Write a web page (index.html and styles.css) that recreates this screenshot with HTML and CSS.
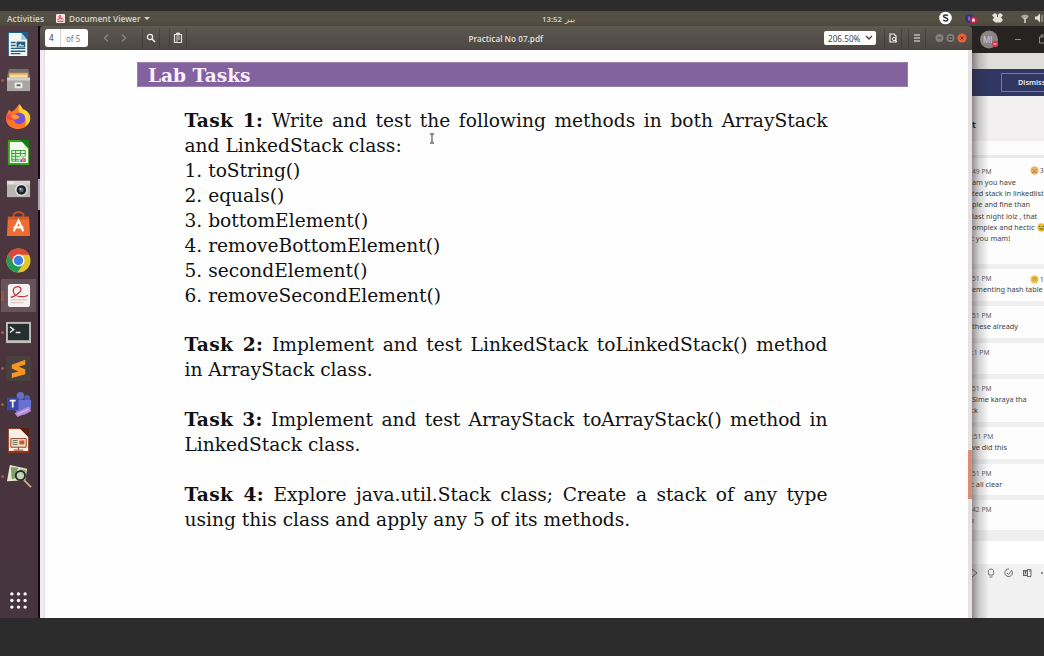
FILE: index.html
```html
<!DOCTYPE html>
<html lang="en">
<head>
<meta charset="utf-8">
<title>Practical No 07.pdf</title>
<link rel="stylesheet" href="styles.css">
</head>
<body>
<div class="screen">
  <header class="topbar">
    <span class="activities">Activities</span>
    <svg class="app-icon" viewBox="0 0 9 9"><rect width="9" height="9" rx="1" fill="#f3e4e4"/><path d="M1.5 5.5C4 5 6 1.5 4 1.5S2.500 5 7.500 5M1.500 7.300h6" fill="none" stroke="#c52c3c" stroke-width="1"/></svg>
    <span class="app-name">Document Viewer</span>
    <i class="caret"></i>
    <span class="clock"><bdi>13:52</bdi> <bdi class="day">بير</bdi></span>
    <svg class="tray" viewBox="0 0 112 15">
      <circle cx="13.500" cy="7" r="6.300" fill="#fff"/><path d="M15.800 5C15 3.500 11.500 3.600 11.500 5.300s4.300 1.200 4.300 3.200-3.800 2-4.500.3" fill="none" stroke="#333" stroke-width="1.500"/>
      <circle cx="37.500" cy="7.500" r="4.500" fill="#353679"/><path d="M37 5.500v4" stroke="#a9a7e0"/><circle cx="41.500" cy="9" r="3.500" fill="#c92045"/><path d="M40 10.500h3l-.5-3h-2z" fill="#fff"/>
      <path d="M60 4l3-2 2.500 2L68 2l3 2-2 2.500 2 2.500-2.500 2.500h-5L60.500 9 62 6.500z" fill="#e4e0da"/><path d="M65.500 4v2" stroke="#57534c"/>
      <path d="M89 5q4-3 8 0l-2 3h-4z" fill="#aaa69d"/><path d="M93 7v5" stroke="#e1ded7" stroke-width="1.500"/>
      <path d="M103 5.500h2l3-3v9l-3-3h-2z" fill="#e4e0da"/><path d="M110 4v7" stroke="#bcb8b0"/>
    </svg>
  </header>

  <main class="desktop">
    <nav class="dock">
      <div class="cell"><svg viewBox="0 0 26 26"><path d="M2 0h21v25H2z" fill="#1d6089"/><path d="M3 1h13l6 7v17H3z" fill="#f2f6f7"/><path d="M16 1v7h6z" fill="#9bc6db"/><path d="M5 11h5M5 14h5M5 17h15M5 20h15M5 22.500h10" stroke="#26607e" stroke-width="1.500"/><rect x="11" y="10" width="9" height="6" fill="#245b78"/><path d="M12 15l3-3 2 2 1-1 1 2z" fill="#b9d9e6"/></svg></div>
      <div class="cell running"><svg viewBox="0 0 26 26"><path d="M3 1h20l2 8H1z" fill="#77716d"/><path d="M3 5h20v6H3z" fill="#f1a84b"/><path d="M4 7h18v4H4z" fill="#f8dca5"/><path d="M1 10h24v14H1z" fill="#aaa6a3"/><path d="M1 10h24v3H1z" fill="#d2cfcc"/><rect x="9" y="15" width="8" height="6" rx="1" fill="#eeeceb"/><rect x="11" y="17" width="4" height="2" fill="#65605e"/></svg></div>
      <div class="cell"><svg viewBox="0 0 26 26"><path d="M3 6l3 2 3-2 5-6 3 5c5 1 9 6 8 12-1 5-6 9-12 9C6 26 0 22 0 15 0 11 2 9 3 6z" fill="#fb7629"/><path d="M14 0l4 6c6 2 8 6 7 11-1 3-3 5-5 6 2-7 0-12-6-14-2-3 0-6 0-9z" fill="#ffd63a"/><path d="M1 11c2-1 6-1 8 1l3 2-4 3-7-1z" fill="#ff4055"/><circle cx="14" cy="15" r="6" fill="#7650d6"/><path d="M4 12c3-2 7-1 10 1-1 3-4 3-6 3z" fill="#ff9b2c"/></svg></div>
      <div class="cell"><svg viewBox="0 0 26 26"><path d="M2 0h22v26H2z" fill="#36a31c"/><path d="M4 2h13l6 7v15H4z" fill="#f3faee"/><path d="M15 0h9v9z" fill="#187a12"/><path d="M6 11h14v11H6zM6 14h14M6 17h14M6 20h14M10 11v11M15 11v11" fill="none" stroke="#319a25"/><path d="M14 17h7v7h-7z" fill="#eee"/><path d="M15 20h1.500v3H15z" fill="#246cae"/><path d="M17 18h1.500v5H17z" fill="#ed6426"/><path d="M19 19h1.500v4H19z" fill="#8b529a"/></svg></div>
      <div class="cell"><svg viewBox="0 0 26 26"><path d="M1 5h24v17H1z" fill="#b9b5b4"/><path d="M1 5h24v4H1z" fill="#d8d4d2"/><path d="M3 6h5v2H3z" fill="#ece9e7"/><circle cx="16" cy="14.500" r="6.500" fill="#dfe0e0"/><circle cx="16" cy="14.500" r="5" fill="#202127"/><circle cx="16" cy="14.500" r="2.500" fill="#506881"/><circle cx="15" cy="13.500" r="1" fill="#c1d6e2"/></svg></div>
      <div class="cell"><svg viewBox="0 0 26 26"><path d="M8 7V2q5-4 10 0v5" fill="none" stroke="#c64e24" stroke-width="2"/><path d="M2 5h22l1 20H1z" fill="#ed6e32"/><path d="M2 5h22v3H2z" fill="#d85a29"/><path d="M8 20l5-11 5 11M8 16h10" fill="none" stroke="#fff" stroke-width="2.200"/></svg></div>
      <div class="cell"><svg viewBox="0 0 26 26"><circle cx="13" cy="13" r="12.500" fill="#e8c52d"/><path d="M2.200 6.700A12.500 12.500 0 0 1 24 7H13l-5 9z" fill="#dc483a"/><path d="M2.200 6.700A12.500 12.500 0 0 0 12 25.500l6-9.500-10 0z" fill="#269b55"/><circle cx="13" cy="13" r="6.200" fill="#fff"/><circle cx="13" cy="13" r="4.900" fill="#397fe4"/></svg></div>
      <div class="cell running active"><svg viewBox="0 0 26 26"><rect x="2" y="1" width="23" height="24" rx="3" fill="#f6f2f1"/><path d="M5 15C10 14 18 8 15 5S6 5 8 10s9 5 15 3" fill="none" stroke="#bd3344" stroke-width="1.300"/><path d="M5 17.500h17M5 20.500h13" stroke="#d7b8b8"/></svg></div>
      <div class="cell running"><svg viewBox="0 0 26 26"><path d="M0 2h26v22H0z" fill="#c0bfbb"/><path d="M2 4h22v17H2z" fill="#272e30"/><path d="M4 7l4 3-4 3M10 13h5" fill="none" stroke="#eee" stroke-width="1.500"/></svg></div>
      <div class="cell running"><svg viewBox="0 0 26 26"><rect width="26" height="26" rx="2" fill="#49403f"/><path d="M6 9l14-5v5l-7 2 7 3v5L6 23v-5l7-2-7-3z" fill="#f99622"/></svg></div>
      <div class="cell running"><svg viewBox="0 0 26 26"><circle cx="15" cy="4" r="4" fill="#646cc4"/><circle cx="22" cy="6" r="3" fill="#505bb8"/><path d="M9 8h17v9q-2 7-9 7-7-1-8-7z" fill="#6872d1"/><path d="M1 6h12v13H1z" fill="#3d49a7"/><path d="M4 9h6M7 9v7" stroke="#fff" stroke-width="1.700"/><path d="M9 22l15-7 2 5-14 6z" fill="#bd8dda"/><path d="M12 23l11-5" stroke="#e3bde9"/></svg></div>
      <div class="cell"><svg viewBox="0 0 26 26"><path d="M2 0h22v26H2z" fill="#943519"/><path d="M3 1h12l8 8v15H3z" fill="#f6eee7"/><path d="M14 0h10v10z" fill="#571e12"/><path d="M5 11h16v9H5zM13 20v3M8 23h10" fill="#eed9c3" stroke="#944123"/><path d="M7 13h5M7 15h5M7 17h5" stroke="#627d4d"/><path d="M14 13h5v4h-5z" fill="#cb5330"/></svg></div>
      <div class="cell running"><svg viewBox="0 0 26 26"><path d="M4 1l18 4-2 12-19 1z" fill="#e8e9d5"/><path d="M5 3l8 1-3 6 4 3-8 3z" fill="#7ea16c"/><path d="M15 5l6 1-1 5-6-2z" fill="#a4b78a"/><circle cx="15" cy="12" r="4.800" fill="#c6d4b6" stroke="#28302a" stroke-width="2"/><path d="M19 17l7 7" stroke="#d2a782" stroke-width="2"/></svg></div>
      <svg class="apps" viewBox="0 0 18 18"><g fill="#fff"><circle cx="2" cy="2" r="1.800"/><circle cx="9" cy="2" r="1.800"/><circle cx="16" cy="2" r="1.800"/><circle cx="2" cy="9" r="1.800"/><circle cx="9" cy="9" r="1.800"/><circle cx="16" cy="9" r="1.800"/><circle cx="2" cy="16" r="1.800"/><circle cx="9" cy="16" r="1.800"/><circle cx="16" cy="16" r="1.800"/></g></svg>
    </nav>
    <div class="strip"><i></i></div>

    <section class="viewer">
      <div class="toolbar">
        <div class="pager"><span class="page">4</span><span class="total">of 5</span></div>
        <svg class="arrows" viewBox="0 0 28 12"><path d="M7 2.500L3.500 6 7 9.500M21 2.500L24.500 6 21 9.500" fill="none" stroke="#8d8780" stroke-width="1.200"/></svg>
        <span class="tool find"><svg viewBox="0 0 10 10"><circle cx="4" cy="4" r="2.600" fill="none" stroke="#efece8" stroke-width="1.300"/><path d="M6 6l3 3" stroke="#efece8" stroke-width="1.600"/></svg></span>
        <span class="tool notes"><svg viewBox="0 0 10 10"><path d="M1.500 1.500h7v8h-7z" fill="none" stroke="#e4e0da" stroke-width="1.200"/><path d="M3.500 0h3v2h-3zM3 4h4M3 6h4M3 8h2" stroke="#e4e0da" fill="#e4e0da" stroke-width=".9"/></svg></span>
        <span class="title">Practical No 07.pdf</span>
        <span class="zoom">206.50%<svg viewBox="0 0 8 6"><path d="M1 1l3 3 3-3" fill="none" stroke="#3c3c3c" stroke-width="1.300"/></svg></span>
        <span class="tool export"><svg viewBox="0 0 10 10"><path d="M2 1h4l2 2v6H2z" fill="none" stroke="#efece8" stroke-width="1.200"/><circle cx="6" cy="6" r="1.600" fill="#514c46" stroke="#efece8"/><path d="M7 7l2 2" stroke="#efece8"/></svg></span>
        <span class="tool menu"><svg viewBox="0 0 10 10"><path d="M2 2h6M2 5h6M2 8h6" stroke="#efece8" stroke-width="1.200"/></svg></span>
        <svg class="controls" viewBox="0 0 32 10"><circle cx="4.500" cy="5" r="4" fill="#85817a"/><path d="M2.500 5h4" stroke="#46423e"/><circle cx="15.500" cy="5" r="4" fill="#85817a"/><path d="M14 3.500h3v3h-3z" fill="none" stroke="#46423e"/><circle cx="27" cy="5" r="4.600" fill="#ec6138"/><path d="M25.500 3.500l3 3M28.500 3.500l-3 3" stroke="#702a17"/></svg>
      </div>
      <div class="canvas">
        <article class="sheet">
          <h1>Lab Tasks</h1>
          <div class="tasks">
            <p class="full"><b>Task 1:</b> Write and test the following methods in both ArrayStack</p>
            <p>and LinkedStack class:</p>
            <p>1. toString()</p>
            <p>2. equals()</p>
            <p>3. bottomElement()</p>
            <p>4. removeBottomElement()</p>
            <p>5. secondElement()</p>
            <p>6. removeSecondElement()</p>
            <p class="full next"><b>Task 2:</b> Implement and test LinkedStack toLinkedStack() method</p>
            <p>in ArrayStack class.</p>
            <p class="full next"><b>Task 3:</b> Implement and test ArrayStack toArrayStack() method in</p>
            <p>LinkedStack class.</p>
            <p class="full next"><b>Task 4:</b> Explore java.util.Stack class; Create a stack of any type</p>
            <p>using this class and apply any 5 of its methods.</p>
          </div>
        </article>
        <div class="scroll"><i></i></div>
        <svg class="cursor" viewBox="0 0 6 11"><path d="M1 .8h1.500L3 1.500 3.500.8H5M3 1v9M1 10.200h1.500L3 9.500l.5.700H5" fill="none" stroke="#333" stroke-width="1"/></svg>
      </div>
    </section>

    <aside class="teams">
      <div class="teams-title"><svg viewBox="0 0 72 27"><circle cx="17" cy="13.500" r="9" fill="#8b8385"/><text class="initials" x="11" y="16.500">ML</text><circle cx="23" cy="18" r="3.200" fill="#c83c50"/><path d="M21.500 18h3" stroke="#eee"/><path d="M43 13.500h6M67.500 11h6v6h-6zM69 11V9h5" fill="none" stroke="#aaa6a3" stroke-width=".8"/></svg></div>
      <div class="teams-light"></div>
      <div class="banner"><span>Dismiss</span></div>
      <div class="heading">t</div>
      <div class="blank"></div>
      <div class="msg first"><time>49 PM</time><p>am you have</p><p>ted stack in linkedlist</p><p>ple and fine than</p><p>last night lolz , that</p><p>omplex and hectic</p><p>: you mam!</p>
        <span class="react"><svg viewBox="0 0 9 9"><circle cx="4.500" cy="4.500" r="4.200" fill="#f2b66a"/><path d="M2.500 3.500h1M5.500 3.500h1M2.500 6.500q2-2 4 0" fill="none" stroke="#92592b"/></svg>3</span>
        <svg class="emoji" viewBox="0 0 9 9"><circle cx="4.500" cy="4.500" r="4.200" fill="#eac12f"/><path d="M2 3.500h1.500M5.500 3.500H7M2.500 6h4" stroke="#62501f"/></svg></div>
      <div class="msg"><time>51 PM</time><p>ementing hash table</p><span class="react"><svg viewBox="0 0 9 9"><circle cx="4.500" cy="4.500" r="4.200" fill="#f2c94e"/><path d="M2 3h5M2.500 5q2 3 4 0z" fill="#fff" stroke="#ae7f29" stroke-width=".8"/></svg>1</span></div>
      <div class="msg"><time>51 PM</time><p>these already</p></div>
      <div class="msg short"><time>:1 PM</time></div>
      <div class="msg tall"><time>51 PM</time><p>Sime karaya tha</p><p>:k</p></div>
      <div class="msg"><time>:51 PM</time><p>ve did this</p></div>
      <div class="msg short"><time>51 PM</time><p>: all clear</p></div>
      <div class="msg last"><time>42 PM</time><p>ı</p></div>
      <div class="compose"></div>
      <div class="compose-tools"><svg viewBox="0 0 72 18"><g fill="none" stroke="#5f5e62" stroke-width=".9"><path d="M0 5l5 4-5 4M17 11q-2-6 2-6t2 6zM17.500 13h3M40 7a3.800 3.800 0 1 1-3-2M35 9l1.500 1.500L40 6M55 5.500h4v7h-4M52 7v5M57 7h2"/></g><path d="M51 6h5v6h-5z" fill="#68666a"/><path d="M52.500 7.500v3h2v-3" stroke="#fff" fill="none" stroke-width=".7"/><circle cx="70" cy="9" r=".9" fill="#555"/></svg></div>
      <div class="shade"></div>
    </aside>
  </main>
</div>
</body>
</html>
```

FILE: styles.css
```css
* { box-sizing: border-box; }
body { margin: 0; background: #2c2c2c; }
p, h1 { margin: 0; }
svg { display: block; flex: none; overflow: visible; }
.screen { width: 1044px; height: 656px; padding: 11px 0 38px; display: flex; flex-direction: column; overflow: hidden; font-family: "Noto Sans", sans-serif; }

.topbar { height: 15px; flex: none; display: flex; align-items: center; padding-left: 7px; background: linear-gradient(#514f49, #55503f 55%, #4b4840); color: #cfcbc4; font-size: 8.3px; font-weight: 600; white-space: nowrap; }
.activities { width: 49px; }
.app-icon { width: 9px; height: 9px; }
.app-name { margin-left: 4px; width: 73px; letter-spacing: -.03px; }
.caret { margin-left: 2px; border: 3px solid transparent; border-top-color: #d5d1ca; border-bottom: 0; }
.clock { margin-left: 392px; display: flex; align-items: center; gap: 3px; width: 40px; font-size: 7.800px; line-height: 14px; }
.day { font-family: "DejaVu Sans", sans-serif; font-weight: 400; font-size: 9px; line-height: 14px; }
.tray { width: 112px; height: 15px; margin-left: auto; }

.desktop { flex: 1; min-height: 0; display: flex; }
.dock { width: 38px; flex: none; background: linear-gradient(#503a43, #49343c 60%, #46353c); display: flex; flex-direction: column; }
.cell { height: 36px; flex: none; display: flex; align-items: center; padding-left: 6px; position: relative; }
.cell svg { width: 25px; height: 25px; }
.active { background: linear-gradient(#67535a, #67535a) 1px 1px / 35px 33px no-repeat; }
.active svg { margin-top: -2px; }
.running::before { content: ""; position: absolute; left: 1px; top: 17px; width: 3px; height: 3px; border-radius: 50%; background: #bb5144; }
.active::before { top: 13px; height: 10px; border-radius: 1px; background: #a4503f; }
.apps { width: 17px; height: 17px; margin: auto 0 9.500px 10px; }
.strip { width: 2px; flex: none; background: #150a12; padding-top: 153px; }
.strip i { display: block; height: 31px; background: #aaa; }

.viewer { width: 932px; flex: none; display: flex; flex-direction: column; }
.toolbar { height: 24px; flex: none; display: flex; align-items: center; background: linear-gradient(#5e5851, #4d4743); border-radius: 4px 4px 0 0; color: #e8e4df; font-size: 8.500px; white-space: nowrap; }
.pager { margin-left: 5px; width: 43px; height: 18px; border-radius: 3px; background: #fff; display: flex; align-items: center; color: #333; font-size: 8px; }
.page { width: 16px; height: 18px; line-height: 18px; border-right: 1px solid #d8d4d4; padding-left: 4px; }
.total { padding-left: 5px; color: #777; }
.arrows { width: 28px; height: 12px; margin-left: 13px; }
.tool { height: 20px; width: 18px; display: flex; align-items: center; justify-content: center; border: solid rgba(40,35,30,.3); border-width: 0 1px; }
.tool svg { width: 10px; height: 10px; }
.find { margin-left: 13px; }
.notes { margin-left: 9px; }
.title { margin-left: 281.500px; width: 76.500px; font-size: 8.200px; font-weight: 600; color: #dedad5; letter-spacing: -.02px; }
.zoom { margin-left: 279px; width: 52px; height: 14px; border-radius: 2px; background: #fff; color: #444; display: flex; align-items: center; padding-left: 4px; gap: 5px; font-size: 8.200px; }
.zoom svg { width: 8px; height: 6px; }
.export { margin-left: 8px; }
.menu { margin-left: 6px; }
.controls { width: 32px; height: 10px; margin-left: 9px; }

.canvas { flex: 1; display: flex; background: #f4e8f2; padding-left: 4px; position: relative; }
.sheet { flex: 1; background: #fefefe; border-left: 1px solid #dedcde; padding: 12px 60px 0 92px; font-family: "DejaVu Serif", serif; color: #111; }
.sheet h1 { width: 771px; height: 25px; background: #83629f; border: 1px solid #9a80af; color: #fbf0ff; font-size: 18.600px; line-height: 26px; padding-left: 10px; }
.tasks { margin: 22px 0 0 47.500px; width: 643px; font-size: 18.620px; line-height: 24.950px; white-space: nowrap; }
.tasks b { letter-spacing: .3px; }
.full { text-align: justify; text-align-last: justify; white-space: normal; }
.next { margin-top: 24.850px; }
.scroll { width: 4px; background: #e5e0e2; padding-top: 400px; }
.scroll i { display: block; height: 49px; background: #dd8b73; }
.cursor { position: absolute; left: 389px; top: 83px; width: 6px; height: 11px; }

.teams { flex: 1; min-width: 0; overflow: hidden; background: #f0eff0; display: flex; flex-direction: column; position: relative; font-size: 7.300px; color: #444; white-space: nowrap; }
.teams > div { flex: none; }
.teams-title { height: 27px; background: #272321; }
.teams-title svg { width: 72px; height: 27px; }
.initials { font-size: 8px; fill: #d4cccf; }
.teams-light { height: 16px; background: #e0dedc; }
.banner { height: 27px; background: #303762; padding: 4px 0 0 29px; }
.banner span { display: block; width: 60px; height: 19px; border: 1px solid #747a9b; color: #e8e8f0; font-weight: 600; line-height: 17px; padding-left: 16px; }
.heading { height: 45px; padding-top: 22px; font-size: 9px; line-height: 13px; font-weight: 700; color: #222; background: #f1eff0; }
.blank { height: 17px; background: #fdfcfd; border-bottom: 3px solid #ece9eb; }
.msg { height: 37px; background: #fdfdfd; border-bottom: 5px solid #f0eff0; padding-top: 4px; line-height: 11.150px; position: relative; }
.msg time { display: block; font-size: 6.700px; color: #666; }
.first { height: 111px; padding-top: 8px; }
.short { height: 36px; }
.tall { height: 48px; }
.last { height: 41px; border-bottom-width: 11px; }
.react { position: absolute; left: 58px; top: 5px; display: flex; align-items: center; gap: 1px; font-size: 6.300px; }
.first .react { top: 7px; }
.react svg, .emoji { width: 9px; height: 9px; }
.emoji { position: absolute; left: 65px; top: 65px; }
.compose { height: 23px; background: #fff; }
.compose-tools { height: 54px; background: #f1f1f2; }
.compose-tools svg { width: 72px; height: 18px; }
.shade { position: absolute; left: 0; top: 27px; bottom: 0; width: 17px; background: linear-gradient(90deg, rgba(40,36,40,.5), rgba(40,36,40,.2) 40%, rgba(40,36,40,0)); }
```
